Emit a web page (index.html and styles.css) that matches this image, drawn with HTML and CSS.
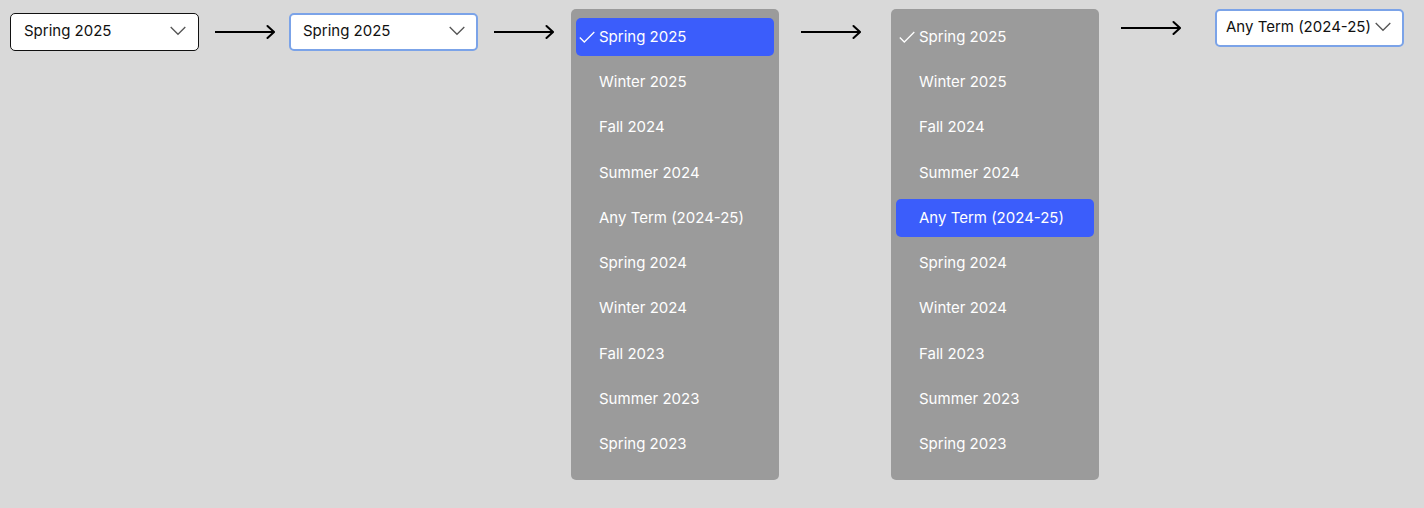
FILE: index.html
```html
<!DOCTYPE html>
<html lang="en">
<head>
<meta charset="utf-8">
<title>Term selector flow</title>
<link rel="stylesheet" href="styles.css">
</head>
<body>
<svg class="symbols" aria-hidden="true">
  <symbol id="arrow" viewBox="0 0 60 16"><path d="M0 8H59"/><path d="M52.500 2L59 8L52.500 14" stroke-linecap="round"/></symbol>
  <symbol id="chevron" viewBox="0 0 16 10"><path d="M0.700 1L8 8.300L15.300 1"/></symbol>
  <symbol id="check" viewBox="0 0 16 12"><path d="M0.800 6.500L5.300 11L15.300 1"/></symbol>
</svg>
<main class="flow">
  <div class="field field-default">
    <select class="select" aria-label="Term"><option>Spring 2025</option></select>
    <svg class="chevron" aria-hidden="true"><use href="#chevron"/></svg>
  </div>
  <svg class="arrow" aria-hidden="true"><use href="#arrow"/></svg>
  <div class="field field-focus">
    <select class="select" aria-label="Term, focused"><option>Spring 2025</option></select>
    <svg class="chevron" aria-hidden="true"><use href="#chevron"/></svg>
  </div>
  <svg class="arrow" aria-hidden="true"><use href="#arrow"/></svg>
  <div class="menu" role="listbox" aria-label="Term options">
    <button class="item item-active" role="option" aria-selected="true"><svg class="check" aria-hidden="true"><use href="#check"/></svg><span class="label">Spring 2025</span></button>
    <button class="item" role="option"><span class="label">Winter 2025</span></button>
    <button class="item" role="option"><span class="label">Fall 2024</span></button>
    <button class="item" role="option"><span class="label">Summer 2024</span></button>
    <button class="item" role="option"><span class="label">Any Term (2024-25)</span></button>
    <button class="item" role="option"><span class="label">Spring 2024</span></button>
    <button class="item" role="option"><span class="label">Winter 2024</span></button>
    <button class="item" role="option"><span class="label">Fall 2023</span></button>
    <button class="item" role="option"><span class="label">Summer 2023</span></button>
    <button class="item" role="option"><span class="label">Spring 2023</span></button>
  </div>
  <svg class="arrow arrow-wide" aria-hidden="true"><use href="#arrow"/></svg>
  <div class="menu" role="listbox" aria-label="Term options, new choice">
    <button class="item" role="option" aria-selected="true"><svg class="check" aria-hidden="true"><use href="#check"/></svg><span class="label">Spring 2025</span></button>
    <button class="item" role="option"><span class="label">Winter 2025</span></button>
    <button class="item" role="option"><span class="label">Fall 2024</span></button>
    <button class="item" role="option"><span class="label">Summer 2024</span></button>
    <button class="item item-active" role="option"><span class="label">Any Term (2024-25)</span></button>
    <button class="item" role="option"><span class="label">Spring 2024</span></button>
    <button class="item" role="option"><span class="label">Winter 2024</span></button>
    <button class="item" role="option"><span class="label">Fall 2023</span></button>
    <button class="item" role="option"><span class="label">Summer 2023</span></button>
    <button class="item" role="option"><span class="label">Spring 2023</span></button>
  </div>
  <svg class="arrow arrow-wide arrow-last" aria-hidden="true"><use href="#arrow"/></svg>
  <div class="field field-focus field-result">
    <select class="select" aria-label="Term, result"><option>Any Term (2024-25)</option></select>
    <svg class="chevron" aria-hidden="true"><use href="#chevron"/></svg>
  </div>
</main>
</body>
</html>
```
FILE: styles.css
```css
* {
  box-sizing: border-box;
}

body {
  margin: 0;
  padding: 9px 20px 28px 10px;
  background: #d9d9d9;
  font-family: Inter, "Liberation Sans", sans-serif;
  font-size: 15px;
  line-height: 20px;
}

.symbols {
  position: absolute;
  width: 0;
  height: 0;
}

.flow {
  display: grid;
  grid-template-columns: 189fr 90fr 189fr 93fr 208fr 112fr 208fr 116fr 189fr;
  align-items: start;
}

.field {
  position: relative;
  margin-top: 4px;
}

.field-result {
  margin-top: 0;
}

.select {
  display: block;
  width: 100%;
  height: 38px;
  padding: 0 36px 2px 13px;
  border: 1px solid #111;
  border-radius: 5px;
  background: #fff;
  color: #111;
  font: inherit;
  appearance: none;
}

.field-focus .select {
  padding-left: 12px;
  border: 2px solid #7ba3e8;
}

.field-result .select {
  padding-left: 9px;
  padding-right: 28px;
}

.chevron {
  position: absolute;
  top: 13px;
  right: 13px;
  width: 16px;
  height: 10px;
  fill: none;
  stroke: #555;
  stroke-width: 1.3;
  pointer-events: none;
}

.arrow {
  width: 60px;
  height: 16px;
  margin: 15px 0 0 16px;
  fill: none;
  stroke: #000;
  stroke-width: 2;
}

.arrow-wide {
  margin-left: 22px;
}

.arrow-last {
  margin-top: 11px;
}

.menu {
  display: flex;
  flex-direction: column;
  justify-content: space-between;
  min-height: 471px;
  padding: 9px 5px 17px;
  border-radius: 5px;
  background: #9b9b9b;
}

.item {
  display: grid;
  grid-template-columns: 16px 1fr;
  column-gap: 4px;
  align-items: center;
  height: 38px;
  padding: 0 3px;
  border: 0;
  border-radius: 5px;
  background: transparent;
  color: #fff;
  font: inherit;
  text-align: left;
}

.item-active {
  background: #3b5dfb;
}

.label {
  grid-column: 2;
  white-space: nowrap;
}

.check {
  width: 16px;
  height: 12px;
  fill: none;
  stroke: #fff;
  stroke-width: 1.3;
}
```
